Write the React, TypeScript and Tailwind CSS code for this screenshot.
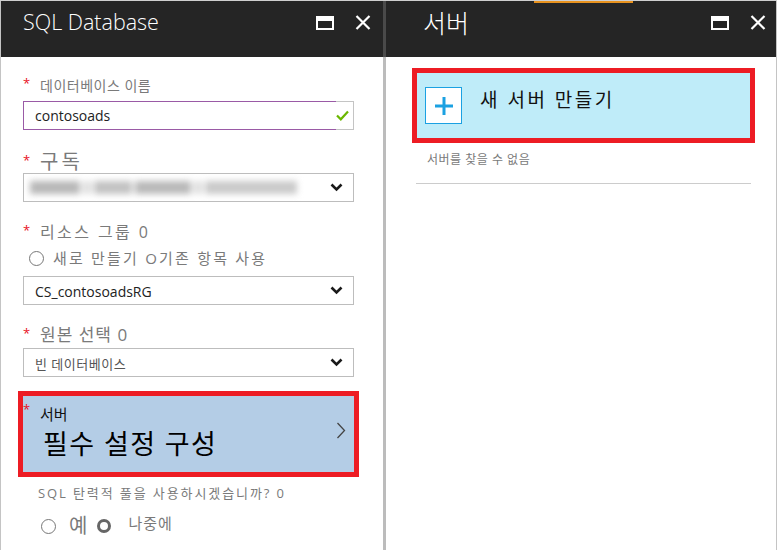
import React from "react";

const MaxIcon = () => (
  <svg width="18" height="14" viewBox="0 0 18 14">
    <rect x="1" y="1" width="16" height="12" fill="none" stroke="white" strokeWidth="2" />
    <rect x="1" y="1" width="16" height="4" fill="white" />
  </svg>
);

const CloseIcon = () => (
  <svg width="16" height="15" viewBox="0 0 16 15">
    <path d="M1.5 1 L14.5 14 M14.5 1 L1.5 14" stroke="white" strokeWidth="2.2" />
  </svg>
);

const ChevronDown = () => (
  <svg width="13" height="9" viewBox="0 0 13 9">
    <path d="M1.5 1.5 L6.5 6.5 L11.5 1.5" fill="none" stroke="#1a1a1a" strokeWidth="2.6" />
  </svg>
);

const Star = () => <span className="w-[17px] shrink-0 text-[13px] leading-none text-[#e81123] -mt-[4px]">*</span>;

const Select = ({ children }: { children: React.ReactNode }) => (
  <div className="h-[29px] border border-[#bdbdbd] bg-white flex items-center pl-[11px] pr-[10px]">
    <div className="flex-1 min-w-0">{children}</div>
    <ChevronDown />
  </div>
);

const Radio = () => <span className="inline-block w-[15px] h-[15px] rounded-full border-[1.5px] border-[#777]" />;

const Header = ({ title, left, closeRight }: { title: string; left: string; closeRight: string }) => (
  <div className="h-[56px] bg-[#252525] flex items-start text-white">
    <div className={`${left} flex-1 font-light`}>{title}</div>
    <div className={`flex items-center gap-[21px] pt-[14px] ${closeRight}`}>
      <MaxIcon />
      <CloseIcon />
    </div>
  </div>
);

export default function App() {
  return (
    <div className="w-[777px] h-[550px] bg-white border-t border-[#cfcfcf] flex font-['Segoe_UI','Open_Sans','Noto_Sans_CJK_KR',sans-serif] overflow-hidden">
      <div className="w-px bg-[#c4c4c4]" />
      {/* left blade */}
      <div className="w-[382px] flex flex-col">
        <Header title="SQL Database" left="pl-[22px] pt-[5px] text-[21.5px]" closeRight="pr-[12px]" />
        <div className="pl-[22px] pr-[29px] flex flex-col">
          <div className="mt-[18px] h-[20px] flex items-center text-[14px] text-[#7a7a7a] tracking-[0.5px]">
            <Star />
            데이터베이스 이름
          </div>
          <div className="mt-[6px] h-[29px] flex">
            <div className="flex-1 border border-r-0 border-[#9a5aa6] flex items-center pl-[11px] text-[14px] text-[#222]">
              contosoads
            </div>
            <div className="w-[18px] border border-l-0 border-[#c4c4c4] flex items-center">
              <svg width="13" height="11" viewBox="0 0 13 11">
                <path d="M1 5.5 L4.8 9.3 L12 1.5" fill="none" stroke="#6bb700" strokeWidth="2.2" />
              </svg>
            </div>
          </div>

          <div className="mt-[21px] h-[22px] flex items-center text-[20px] text-[#7a7a7a] tracking-[3px]">
            <Star />
            구독
          </div>
          <Select>
            <div className="flex items-center gap-[3px] h-[18px] ml-[-5px] blur-[3px]">
              <div className="w-[50px] h-[13px] bg-[#b8b8b8]" />
              <div className="w-[8px] h-[13px] bg-[#dcdcdc]" />
              <div className="w-[38px] h-[13px] bg-[#c2c2c2]" />
              <div className="w-[56px] h-[13px] bg-[#b9b9b9]" />
              <div className="w-[8px] h-[13px] bg-[#dcdcdc]" />
              <div className="w-[92px] h-[13px] bg-[#cacaca]" />
            </div>
          </Select>

          <div className="mt-[20px] h-[20px] flex items-center text-[16px] text-[#7a7a7a] tracking-[2.4px]">
            <Star />
            리소스 그룹 0
          </div>
          <div className="mt-[6px] h-[20px] flex items-center pl-[6px] gap-[9px] text-[15px] text-[#7a7a7a] tracking-[2.2px]">
            <Radio />
            새로 만들기 O기존 항목 사용
          </div>
          <div className="mt-[8px]">
            <Select>
              <span className="text-[14px] text-[#222]">CS_contosoadsRG</span>
            </Select>
          </div>

          <div className="mt-[20px] h-[20px] flex items-center text-[17px] text-[#7a7a7a] tracking-[1px]">
            <Star />
            원본 선택 0
          </div>
          <div className="mt-[3px]">
            <Select>
              <span className="text-[13px] text-[#555] tracking-[0.5px]">빈 데이터베이스</span>
            </Select>
          </div>

          <div className="mt-[14px] -mx-[5px] h-[86px] border-[5px] border-[#ed1c24] bg-[#b4cde6] flex items-start pr-[8px]">
            <div className="flex-1 flex flex-col pt-[8px]">
              <div className="h-[20px] flex items-center text-[15px] leading-[20px] text-[#111]">
                <span className="w-[17px] text-[13px] leading-none text-[#e81123] -mt-[10px]">*</span>
                서버
              </div>
              <div className="mt-[1px] pl-[20px] text-[27px] leading-[38px] text-black tracking-[1.4px]">필수 설정 구성</div>
            </div>
            <svg width="10" height="17" viewBox="0 0 10 17" className="mt-[26px]">
              <path d="M1.5 1 L8.5 8.5 L1.5 16" fill="none" stroke="#444" strokeWidth="1.3" />
            </svg>
          </div>

          <div className="mt-[8px] pl-[15px] h-[18px] flex items-center text-[13px] text-[#7a7a7a] tracking-[1.9px]">
            SQL 탄력적 풀을 사용하시겠습니까? 0
          </div>
          <div className="mt-[13px] pl-[18px] flex items-center text-[#7a7a7a]">
            <Radio />
            <span className="ml-[13px] text-[20px] leading-none">예</span>
            <span className="ml-[10px] inline-block w-[14px] h-[14px] rounded-full border-[3px] border-[#666]" />
            <span className="ml-[17px] text-[15px] leading-none -mt-[5px] tracking-[1px]">나중에</span>
          </div>
        </div>
      </div>

      {/* separator */}
      <div className="w-[3px] flex flex-col">
        <div className="h-[56px] bg-[#4a4a4a]" />
        <div className="flex-1 bg-[#bcbcbc]" />
      </div>

      {/* right blade */}
      <div className="flex-1 flex flex-col relative">
        <div className="absolute top-0 left-[148px] w-[99px] h-[2px] bg-[#e8921e]" />
        <Header title="서버" left="pl-[37px] pt-[4px] text-[25px]" closeRight="pr-[10px]" />
        <div className="pl-[26px] pr-[21px] flex flex-col">
          <div className="mt-[11px] h-[75px] border-[5px] border-[#ed1c24] bg-[#bfecf9] flex items-center pl-[8px]">
            <div className="w-[37px] h-[37px] border-[1.5px] border-[#1ba1e2] bg-white flex items-center justify-center">
              <svg width="20" height="20" viewBox="0 0 20 20">
                <path d="M10 1 V19 M1 10 H19" stroke="#1ba1e2" strokeWidth="3" />
              </svg>
            </div>
            <span className="ml-[18px] -mt-[10px] text-[19px] text-[#111] tracking-[2.5px]">새 서버 만들기</span>
          </div>
          <div className="mt-[9px] pl-[15px] h-[16px] flex items-center text-[12px] text-[#7a7a7a] tracking-[0.5px]">
            서버를 찾을 수 없음
          </div>
          <div className="mt-[15px] mx-[4px] h-px bg-[#cccccc]" />
        </div>
      </div>
      <div className="w-px bg-[#c4c4c4]" />
    </div>
  );
}
